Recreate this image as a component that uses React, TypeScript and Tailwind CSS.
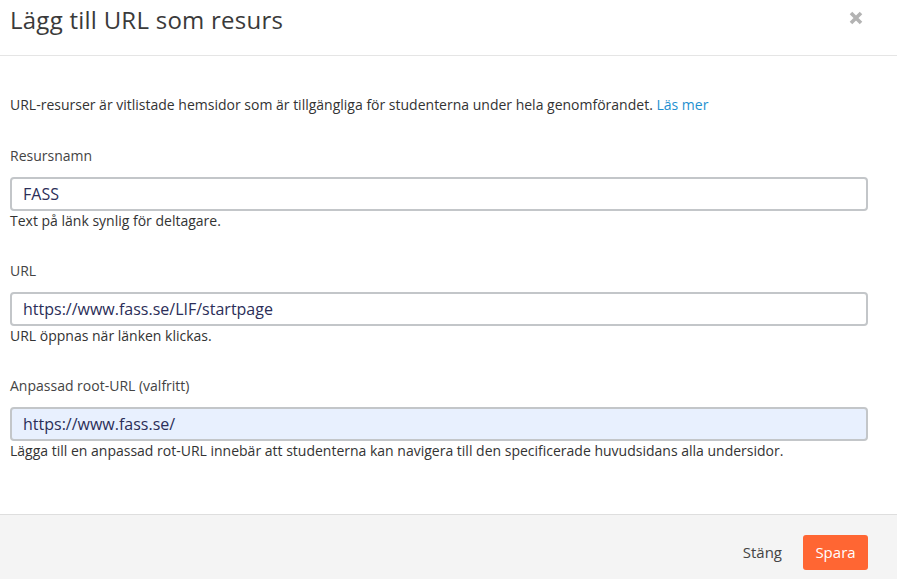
import React from "react";

function Field({ label, value, help, autofill }: { label: string; value: string; help: string; autofill?: boolean }) {
  return (
    <div className="flex flex-col">
      <label className="h-[20px] leading-[20px] text-[14px] text-[#444]">{label}</label>
      <div
        className={`mt-[11px] h-[34px] rounded-[4px] border-2 border-[#c3c6c9] flex items-center pl-[11px] text-[16px] text-[#2b2e58] ${autofill ? "bg-[#e8f0fe]" : "bg-white"}`}
      >
        {value}
      </div>
      <div className="h-[20px] leading-[20px] text-[14px] text-[#333]">{help}</div>
    </div>
  );
}

export default function App() {
  return (
    <div
      className="w-[897px] h-[579px] bg-white flex flex-col overflow-hidden"
      style={{ fontFamily: '"Open Sans", "Noto Sans", sans-serif' }}
    >
      <div className="h-[56px] shrink-0 border-b border-[#e5e5e5] flex items-start justify-between pl-[10px] pr-[34px]">
        <h1 className="mt-[3px] text-[24px] leading-[34px] tracking-[0.25px] text-[#3a3a3a] font-normal">Lägg till URL som resurs</h1>
        <svg className="mt-[11px]" width="14" height="14" viewBox="0 0 14 14">
          <path d="M2 2 L12 12 M12 2 L2 12" stroke="#b3b3b3" strokeWidth="3.6" strokeLinecap="butt" />
        </svg>
      </div>
      <div className="flex-1 pl-[10px] pr-[29px] pt-[39px] flex flex-col">
        <p className="h-[20px] leading-[20px] text-[14px] text-[#333]">
          URL-resurser är vitlistade hemsidor som är tillgängliga för studenterna under hela genomförandet.{" "}
          <a className="text-[#1e90d0]">Läs mer</a>
        </p>
        <div className="mt-[31px] flex flex-col gap-[30px]">
          <Field label="Resursnamn" value="FASS" help="Text på länk synlig för deltagare." />
          <Field label="URL" value="https://www.fass.se/LIF/startpage" help="URL öppnas när länken klickas." />
          <Field
            label="Anpassad root-URL (valfritt)"
            value="https://www.fass.se/"
            autofill
            help="Lägga till en anpassad rot-URL innebär att studenterna kan navigera till den specificerade huvudsidans alla undersidor."
          />
        </div>
      </div>
      <div className="h-[65px] shrink-0 border-t border-[#dedede] bg-[#f4f4f4] flex items-start justify-end pr-[29px] pt-[20px] gap-[9px]">
        <button className="h-[35px] px-[12px] text-[15px] text-[#444]">Stäng</button>
        <button className="h-[35px] w-[65px] rounded-[3px] bg-[#ff6633] text-[15px] text-white">Spara</button>
      </div>
    </div>
  );
}
